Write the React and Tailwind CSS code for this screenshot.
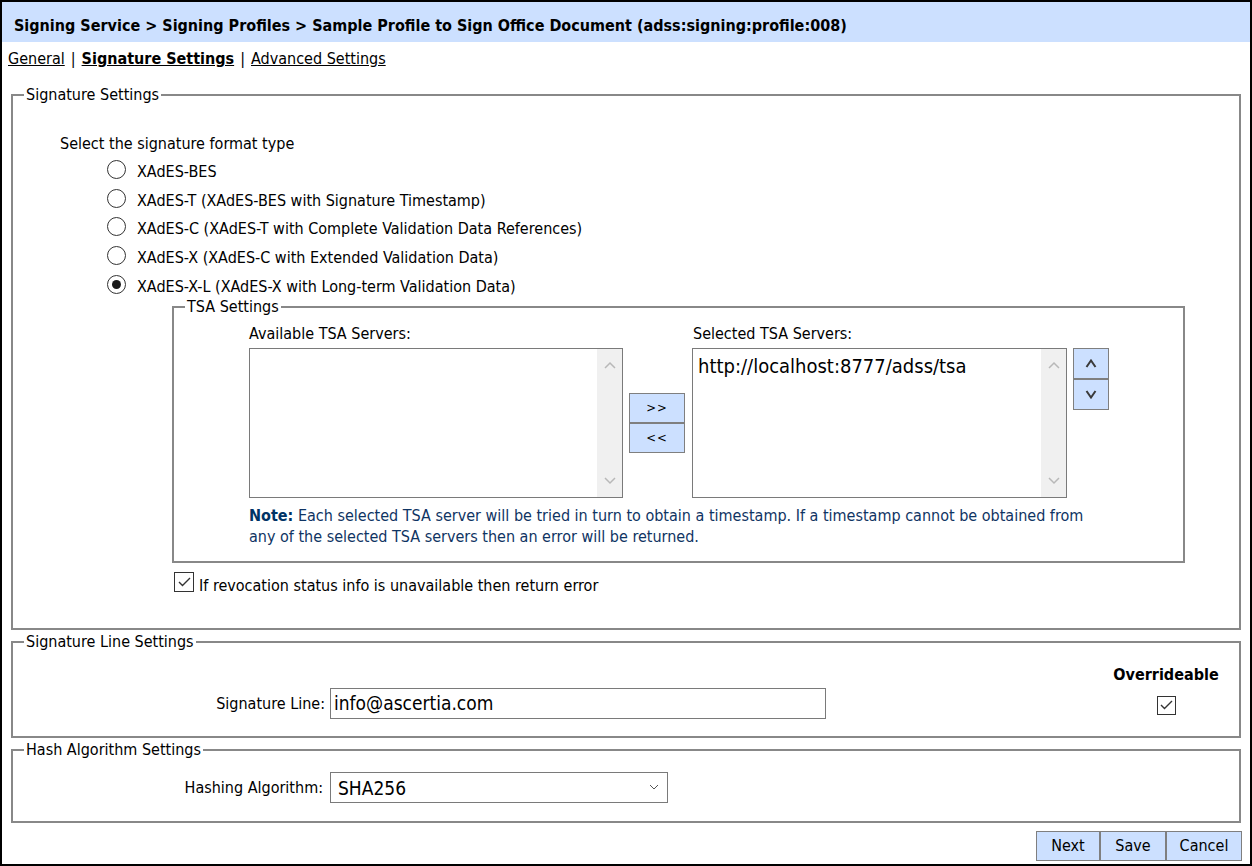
import React from 'react';

const FONT = { fontFamily: '"DejaVu Sans Condensed", "Liberation Sans", sans-serif' };

function Radio({ checked, label }) {
  return (
    <div className="flex items-center h-[28.8px] pl-[47px]">
      <span className="w-[19px] h-[19px] rounded-full border border-[#333] bg-white flex items-center justify-center">
        {checked && <span className="w-[9px] h-[9px] rounded-full bg-[#1a1a1a]" />}
      </span>
      <span className="ml-[11px] mt-[5px] leading-[20px]">{label}</span>
    </div>
  );
}

function CheckBox({ size = 20 }) {
  return (
    <span
      className={
        'flex items-center justify-center border border-[#333] bg-white ' +
        (size === 20 ? 'w-[20px] h-[20px]' : 'w-[19px] h-[19px]')
      }
    >
      <svg width="13" height="10" viewBox="0 0 13 10" fill="none">
        <polyline points="1,5 4.5,8.5 12,1" stroke="#333" strokeWidth="1.4" />
      </svg>
    </span>
  );
}

function Chevron({ up, color = '#b8b8b8', bold }) {
  if (bold) {
    return (
      <svg width="12" height="9" viewBox="0 0 12 9" fill="none">
        <polyline points={up ? '1.5,8 6,1.5 10.5,8' : '1.5,1 6,7.5 10.5,1'} stroke={color} strokeWidth="2" />
      </svg>
    );
  }
  return (
    <svg width="12" height="8" viewBox="0 0 12 8" fill="none">
      <polyline points={up ? '1,7 6,2 11,7' : '1,1 6,6 11,1'} stroke={color} strokeWidth="1.5" />
    </svg>
  );
}

function ListBox({ children }) {
  return (
    <div className="flex h-[150px] border border-[#7a7a7a] bg-white">
      <div className="flex-1 px-[5px] pt-[4px] text-[20px] leading-[26px]">{children}</div>
      <div className="w-[25px] bg-[#f0f0f0] flex flex-col items-center justify-between py-[12px]">
        <Chevron up />
        <Chevron />
      </div>
    </div>
  );
}

function Fieldset({ legend, className, children }) {
  return (
    <fieldset className={'border-2 border-[#888] ' + className}>
      <legend className="ml-[11px] px-[2px] text-[16px] leading-[18px]">{legend}</legend>
      {children}
    </fieldset>
  );
}

export default function App() {
  return (
    <div className="w-[1252px] h-[866px] border-2 border-black bg-white text-black text-[16px] flex flex-col" style={FONT}>
      <div className="h-[40px] bg-[#cce0ff] flex items-center px-[12px] pt-[7px] font-bold text-[16px]">
        Signing Service &gt; Signing Profiles &gt; Sample Profile to Sign Office Document (adss:signing:profile:008)
      </div>

      <div className="mt-[7px] px-[6px] leading-[20px]">
        <a className="underline">General</a>
        <span className="mx-[6px]">|</span>
        <a className="underline font-bold">Signature Settings</a>
        <span className="mx-[6px]">|</span>
        <a className="underline">Advanced Settings</a>
      </div>

      <Fieldset legend="Signature Settings" className="mx-[9px] mt-[17px]">
        <div className="pl-[47px] pt-[31px] pb-[32px]">
          <div className="leading-[20px] -mt-[1px] mb-[1px]">Select the signature format type</div>
          <Radio label="XAdES-BES" />
          <Radio label="XAdES-T (XAdES-BES with Signature Timestamp)" />
          <Radio label="XAdES-C (XAdES-T with Complete Validation Data References)" />
          <Radio label="XAdES-X (XAdES-C with Extended Validation Data)" />
          <Radio checked label="XAdES-X-L (XAdES-X with Long-term Validation Data)" />

          <Fieldset legend="TSA Settings" className="ml-[112px] w-[1013px] -mt-[1px]">
            <div className="pl-[75px] pt-[8px] pb-[14px]">
              <div className="flex items-start">
                <div className="w-[374px]">
                  <div className="leading-[20px] mb-[4px]">Available TSA Servers:</div>
                  <ListBox />
                </div>
                <div className="ml-[6px] mt-[69px] flex flex-col">
                  <button className="w-[56px] h-[30px] bg-[#cce0ff] border border-[#7f7f7f] text-[13px] tracking-[1px]">&gt;&gt;</button>
                  <button className="w-[56px] h-[30px] bg-[#cce0ff] border border-[#7f7f7f] text-[13px] tracking-[1px]">&lt;&lt;</button>
                </div>
                <div className="ml-[7px] w-[375px]">
                  <div className="leading-[20px] mb-[4px] pl-[1px]">Selected TSA Servers:</div>
                  <ListBox>http://localhost:8777/adss/tsa</ListBox>
                </div>
                <div className="ml-[6px] mt-[24px] flex flex-col">
                  <button className="w-[36px] h-[31px] bg-[#cce0ff] border border-[#7f7f7f] flex items-center justify-center">
                    <Chevron up bold color="#3a3a3a" />
                  </button>
                  <button className="w-[36px] h-[31px] bg-[#cce0ff] border border-[#7f7f7f] flex items-center justify-center">
                    <Chevron bold color="#3a3a3a" />
                  </button>
                </div>
              </div>
              <div className="mt-[7px] leading-[21px] text-[#0f3463] whitespace-nowrap">
                <span className="font-bold text-[#003366]">Note:</span> Each selected TSA server will be tried in turn to obtain a timestamp. If a timestamp cannot be obtained from
                <br />
                any of the selected TSA servers then an error will be returned.
              </div>
            </div>
          </Fieldset>

          <div className="mt-[9px] ml-[114px] flex items-start">
            <CheckBox />
            <span className="ml-[5px] mt-[4px] leading-[20px]">If revocation status info is unavailable then return error</span>
          </div>
        </div>
      </Fieldset>

      <Fieldset legend="Signature Line Settings" className="mx-[9px] mt-[3px]">
        <div className="flex pt-[13px] pb-[17px] pr-[19px]">
          <div className="flex-1 flex items-center mt-[24px]">
            <label className="w-[312px] text-right leading-[20px] pt-[2px]">Signature Line:</label>
            <div className="ml-[5px] w-[496px] h-[31px] border border-[#7a7a7a] flex items-center px-[3px] text-[19px]">
              info@ascertia.com
            </div>
          </div>
          <div className="w-[108px] flex flex-col items-center">
            <div className="font-bold leading-[20px] whitespace-nowrap pt-[1px]">Overrideable</div>
            <div className="mt-[11px]">
              <CheckBox size={19} />
            </div>
          </div>
        </div>
      </Fieldset>

      <Fieldset legend="Hash Algorithm Settings" className="mx-[9px] mt-[3px]">
        <div className="flex items-center pt-[13px] pb-[18px]">
          <label className="w-[310px] text-right leading-[20px] pt-[2px]">Hashing Algorithm:</label>
          <div className="ml-[7px] w-[338px] h-[31px] border border-[#7a7a7a] flex items-center justify-between pl-[7px] pr-[8px]">
            <span className="text-[19px] pt-[1px]">SHA256</span>
            <svg width="10" height="6" viewBox="0 0 10 6" fill="none">
              <polyline points="1,1 5,5 9,1" stroke="#555" strokeWidth="1" />
            </svg>
          </div>
        </div>
      </Fieldset>

      <div className="mt-[8px] flex justify-end pr-[8px]">
        <button className="w-[64px] h-[30px] bg-[#cce0ff] border border-[#7f7f7f]">Next</button>
        <button className="w-[66px] h-[30px] bg-[#cce0ff] border border-[#7f7f7f]">Save</button>
        <button className="w-[76px] h-[30px] bg-[#cce0ff] border border-[#7f7f7f]">Cancel</button>
      </div>
    </div>
  );
}
